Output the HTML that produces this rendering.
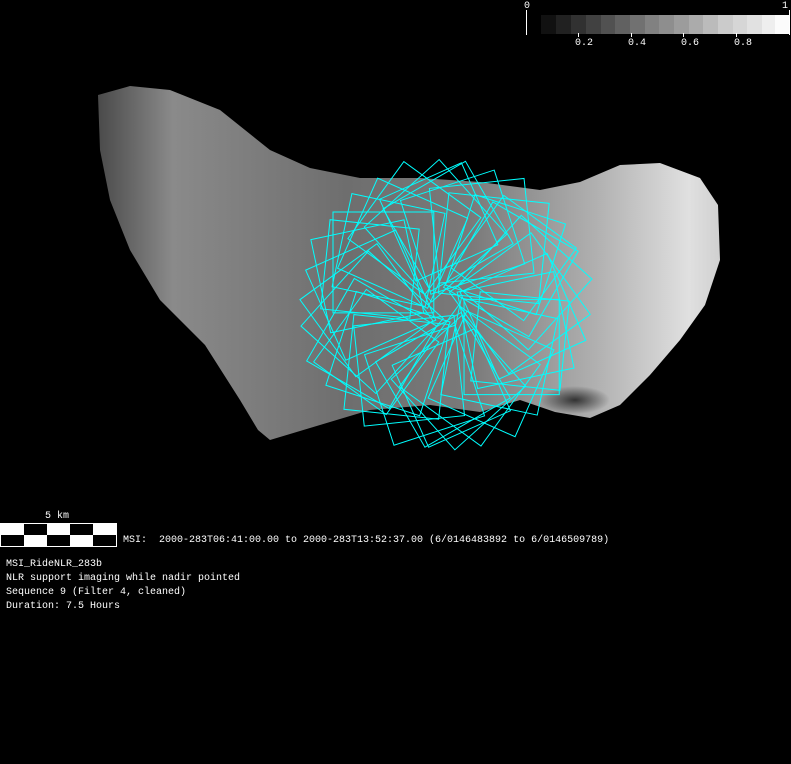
<!DOCTYPE html>
<html><head><meta charset="utf-8"><style>
html,body{margin:0;padding:0;background:#000;width:791px;height:764px;overflow:hidden;position:relative}
.t{position:absolute;color:#fff;font-family:"Liberation Mono","DejaVu Sans Mono",monospace;font-size:10px;line-height:14px;white-space:pre}
rect{vector-effect:non-scaling-stroke}
</style></head><body>
<svg width="791" height="764" style="position:absolute;left:0;top:0">
<defs>
<linearGradient id="g" x1="0" y1="0" x2="1" y2="0">
<stop offset="0" stop-color="#4a4a4a"/><stop offset="0.12" stop-color="#8a8a8a"/>
<stop offset="0.4" stop-color="#6e6e6e"/><stop offset="0.6" stop-color="#7a7a7a"/>
<stop offset="0.8" stop-color="#b0b0b0"/><stop offset="0.95" stop-color="#e0e0e0"/><stop offset="1" stop-color="#d0d0d0"/></linearGradient>
<radialGradient id="sh" cx="0.5" cy="0.5" r="0.5"><stop offset="0" stop-color="#000" stop-opacity="0.7"/><stop offset="1" stop-color="#000" stop-opacity="0"/></radialGradient>
</defs>
<polygon fill="url(#g)" points="98,95 130,86 170,90 220,110 270,150 310,168 360,178 420,178 480,182 540,190 580,182 620,165 660,163 700,178 718,205 720,260 705,305 680,340 650,375 620,405 590,418 555,412 520,400 480,412 430,405 370,410 320,425 270,440 258,430 240,400 205,345 160,300 130,250 110,200 100,150"/>
<ellipse cx="575" cy="400" rx="35" ry="14" fill="url(#sh)"/>
<ellipse cx="445" cy="312" rx="14" ry="18" fill="#777" opacity="0.7"/>
<g fill="none" stroke="#00ffff" stroke-width="1" transform="translate(445 305) scale(1.12) translate(-445 -305)">
<rect x="462" y="300" width="85" height="85" transform="rotate(0 445 305)"/>
<rect x="458" y="296" width="88" height="88" transform="rotate(12 445 305)"/>
<rect x="465" y="302" width="85" height="85" transform="rotate(24 445 305)"/>
<rect x="455" y="298" width="90" height="90" transform="rotate(36 445 305)"/>
<rect x="462" y="300" width="85" height="85" transform="rotate(48 445 305)"/>
<rect x="458" y="296" width="88" height="88" transform="rotate(60 445 305)"/>
<rect x="465" y="302" width="85" height="85" transform="rotate(72 445 305)"/>
<rect x="455" y="298" width="90" height="90" transform="rotate(84 445 305)"/>
<rect x="462" y="300" width="85" height="85" transform="rotate(96 445 305)"/>
<rect x="458" y="296" width="88" height="88" transform="rotate(108 445 305)"/>
<rect x="465" y="302" width="85" height="85" transform="rotate(120 445 305)"/>
<rect x="455" y="298" width="90" height="90" transform="rotate(132 445 305)"/>
<rect x="462" y="300" width="85" height="85" transform="rotate(144 445 305)"/>
<rect x="458" y="296" width="88" height="88" transform="rotate(156 445 305)"/>
<rect x="465" y="302" width="85" height="85" transform="rotate(168 445 305)"/>
<rect x="455" y="298" width="90" height="90" transform="rotate(180 445 305)"/>
<rect x="462" y="300" width="85" height="85" transform="rotate(192 445 305)"/>
<rect x="458" y="296" width="88" height="88" transform="rotate(204 445 305)"/>
<rect x="465" y="302" width="85" height="85" transform="rotate(216 445 305)"/>
<rect x="455" y="298" width="90" height="90" transform="rotate(228 445 305)"/>
<rect x="462" y="300" width="85" height="85" transform="rotate(240 445 305)"/>
<rect x="458" y="296" width="88" height="88" transform="rotate(252 445 305)"/>
<rect x="465" y="302" width="85" height="85" transform="rotate(264 445 305)"/>
<rect x="455" y="298" width="90" height="90" transform="rotate(276 445 305)"/>
<rect x="462" y="300" width="85" height="85" transform="rotate(288 445 305)"/>
<rect x="458" y="296" width="88" height="88" transform="rotate(300 445 305)"/>
<rect x="465" y="302" width="85" height="85" transform="rotate(312 445 305)"/>
<rect x="455" y="298" width="90" height="90" transform="rotate(324 445 305)"/>
<rect x="462" y="300" width="85" height="85" transform="rotate(336 445 305)"/>
<rect x="458" y="296" width="88" height="88" transform="rotate(348 445 305)"/>
<rect x="475" y="290" width="80" height="80" transform="rotate(6 445 305)"/>
<rect x="475" y="290" width="80" height="80" transform="rotate(66 445 305)"/>
<rect x="475" y="290" width="80" height="80" transform="rotate(126 445 305)"/>
<rect x="475" y="290" width="80" height="80" transform="rotate(186 445 305)"/>
<rect x="475" y="290" width="80" height="80" transform="rotate(246 445 305)"/>
<rect x="475" y="290" width="80" height="80" transform="rotate(306 445 305)"/>
</g>
<g>
<rect x="541" y="15" width="15" height="19" fill="#111"/><rect x="556" y="15" width="15" height="19" fill="#212121"/>
<rect x="571" y="15" width="15" height="19" fill="#313131"/><rect x="586" y="15" width="15" height="19" fill="#414141"/>
<rect x="601" y="15" width="15" height="19" fill="#515151"/><rect x="615" y="15" width="15" height="19" fill="#616161"/>
<rect x="630" y="15" width="15" height="19" fill="#717171"/><rect x="645" y="15" width="15" height="19" fill="#818181"/>
<rect x="659" y="15" width="15" height="19" fill="#8e8e8e"/><rect x="674" y="15" width="15" height="19" fill="#9c9c9c"/>
<rect x="689" y="15" width="15" height="19" fill="#ababab"/><rect x="703" y="15" width="15" height="19" fill="#bbbbbb"/>
<rect x="718" y="15" width="15" height="19" fill="#cbcbcb"/><rect x="733" y="15" width="15" height="19" fill="#d6d6d6"/>
<rect x="747" y="15" width="15" height="19" fill="#e1e1e1"/><rect x="762" y="15" width="15" height="19" fill="#eeeeee"/>
<rect x="775" y="15" width="15" height="19" fill="#fbfbfb"/>
<rect x="526" y="10" width="1" height="25" fill="#fff"/><rect x="789" y="10" width="1" height="25" fill="#fff"/>
<rect x="578" y="33" width="1" height="4" fill="#fff"/><rect x="631" y="33" width="1" height="4" fill="#fff"/>
<rect x="683" y="33" width="1" height="4" fill="#fff"/><rect x="736" y="33" width="1" height="4" fill="#fff"/>
</g>
<rect x="0.5" y="523.5" width="116" height="23" fill="#000" stroke="#fff"/>
<rect x="1" y="524" width="23" height="11" fill="#fff"/><rect x="47" y="524" width="23" height="11" fill="#fff"/><rect x="93" y="524" width="23" height="11" fill="#fff"/>
<rect x="24" y="535" width="23" height="11" fill="#fff"/><rect x="70" y="535" width="23" height="11" fill="#fff"/>
</svg>
<div class="t" style="left:524px;top:0px">0</div>
<div class="t" style="left:782px;top:0px">1</div>
<div class="t" style="left:575px;top:37px">0.2</div>
<div class="t" style="left:628px;top:37px">0.4</div>
<div class="t" style="left:681px;top:37px">0.6</div>
<div class="t" style="left:734px;top:37px">0.8</div>
<div class="t" style="left:45px;top:510px">5 km</div>
<div class="t" style="left:123px;top:534px">MSI:  2000-283T06:41:00.00 to 2000-283T13:52:37.00 (6/0146483892 to 6/0146509789)</div>
<div class="t" style="left:6px;top:558px">MSI_RideNLR_283b
NLR support imaging while nadir pointed
Sequence 9 (Filter 4, cleaned)
Duration: 7.5 Hours</div>
</body></html>
